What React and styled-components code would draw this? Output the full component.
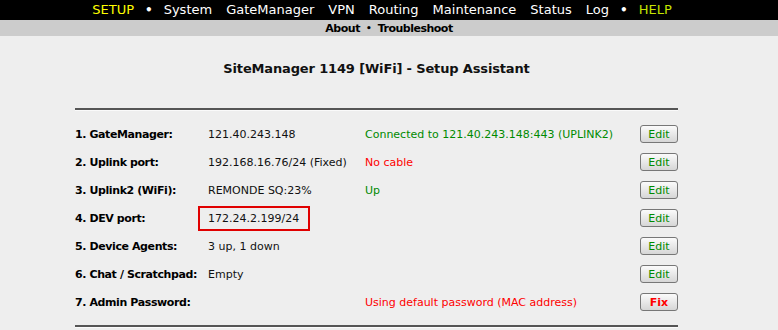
import React from "react";
import styled, { createGlobalStyle } from "styled-components";

const GlobalStyle = createGlobalStyle`
  html, body {
    margin: 0;
    padding: 0;
    background: #eeeeee;
    font-family: "DejaVu Sans", Verdana, sans-serif;
  }
`;

const rows = [
  { label: "1. GateManager:", value: "121.40.243.148", status: "Connected to 121.40.243.148:443 (UPLINK2)", tone: "ok", action: "Edit" },
  { label: "2. Uplink port:", value: "192.168.16.76/24 (Fixed)", status: "No cable", tone: "bad", action: "Edit" },
  { label: "3. Uplink2 (WiFi):", value: "REMONDE SQ:23%", status: "Up", tone: "ok", action: "Edit" },
  { label: "4. DEV port:", value: "172.24.2.199/24", status: "", tone: "ok", action: "Edit", marked: true },
  { label: "5. Device Agents:", value: "3 up, 1 down", status: "", tone: "ok", action: "Edit" },
  { label: "6. Chat / Scratchpad:", value: "Empty", status: "", tone: "ok", action: "Edit" },
  { label: "7. Admin Password:", value: "", status: "Using default password (MAC address)", tone: "bad", action: "Fix" },
];

function App() {
  return (
    <>
      <GlobalStyle />
      <TopNav>
        <NavItem $accent="#ffff00">SETUP</NavItem>
        <Dot>•</Dot>
        <NavItem>System</NavItem>
        <NavItem>GateManager</NavItem>
        <NavItem>VPN</NavItem>
        <NavItem>Routing</NavItem>
        <NavItem>Maintenance</NavItem>
        <NavItem>Status</NavItem>
        <NavItem>Log</NavItem>
        <Dot>•</Dot>
        <NavItem $accent="#c6e400">HELP</NavItem>
      </TopNav>
      <SubNav>
        <SubItem>About</SubItem>
        <SubDot>•</SubDot>
        <SubItem>Troubleshoot</SubItem>
      </SubNav>
      <Main>
        <Title>SiteManager 1149 [WiFi] - Setup Assistant</Title>
        <Rule />
        <Table>
          {rows.map((r) => (
            <Row key={r.label}>
              <Label>{r.label}</Label>
              <Value $marked={r.marked}>{r.value}</Value>
              <Status $tone={r.tone}>{r.status}</Status>
              <Button $fix={r.action === "Fix"}>{r.action}</Button>
            </Row>
          ))}
        </Table>
        <Rule />
      </Main>
    </>
  );
}

export default App;

const TopNav = styled.div`
  background: #000;
  height: 20px;
  display: flex;
  align-items: center;
  justify-content: center;
  gap: 14px;
  padding-right: 14px;
`;

const NavItem = styled.span`
  color: ${(p) => p.$accent || "#fff"};
  font-size: 13px;
  line-height: 20px;
`;

const Dot = styled.span`
  color: #fff;
  font-size: 12px;
  font-weight: bold;
  line-height: 20px;
  margin: 0 -3px;
`;

const SubNav = styled.div`
  background: #cccccc;
  height: 16px;
  display: flex;
  align-items: center;
  justify-content: center;
  gap: 6px;
`;

const SubItem = styled.span`
  font-size: 11px;
  font-weight: bold;
  letter-spacing: -0.5px;
  color: #000;
`;

const SubDot = styled.span`
  font-size: 9px;
  font-weight: bold;
  color: #000;
`;

const Main = styled.div`
  width: 603px;
  margin-left: 75px;
  padding-top: 24px;
`;

const Title = styled.div`
  text-align: center;
  font-size: 13px;
  font-weight: bold;
  letter-spacing: -0.15px;
  color: #111;
  line-height: 18px;
  margin-bottom: 30px;
`;

const Rule = styled.div`
  height: 2px;
  background: #555;
  border-bottom: 1px solid #fafafa;
`;

const Table = styled.div`
  padding: 9px 0 9px;
`;

const Row = styled.div`
  display: grid;
  grid-template-columns: 133px 157px 1fr 38px;
  align-items: center;
  height: 28px;
  font-size: 11px;
`;

const Label = styled.div`
  font-weight: bold;
  letter-spacing: -0.4px;
  color: #000;
`;

const Value = styled.div`
  color: #111;
  justify-self: start;
  ${(p) =>
    p.$marked &&
    `
    margin-left: -10px;
    padding: 4px 9px 4px 8px;
    border: 2px solid #e00000;
  `}
`;

const Status = styled.div`
  color: ${(p) => (p.$tone === "bad" ? "#ff0000" : "#008a00")};
`;

const Button = styled.div`
  box-sizing: border-box;
  height: 18px;
  border: 1px solid #777;
  border-radius: 3px;
  background: linear-gradient(#fbfbfb, #d6d6d6);
  display: flex;
  align-items: center;
  justify-content: center;
  font-size: 11px;
  font-weight: ${(p) => (p.$fix ? "bold" : "normal")};
  color: ${(p) => (p.$fix ? "#ff0000" : "#008a00")};
`;
